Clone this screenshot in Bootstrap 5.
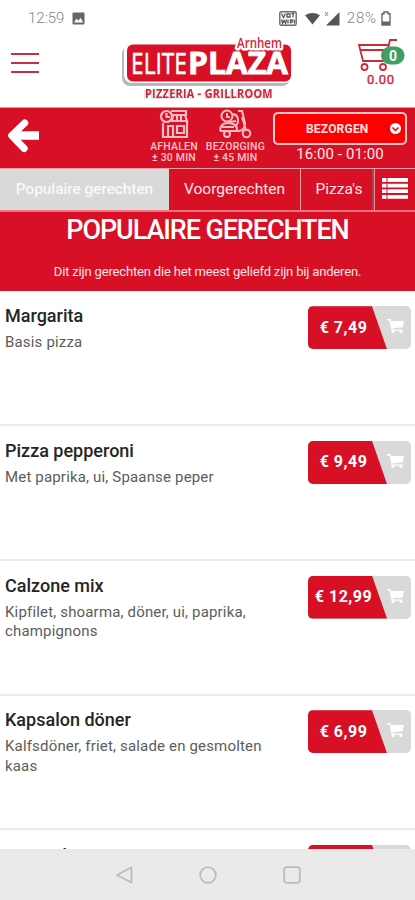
<!DOCTYPE html>
<html lang="nl">
<head>
<meta charset="utf-8">
<meta name="viewport" content="width=device-width, initial-scale=1">
<title>Elite Plaza Arnhem</title>
<link href="https://cdn.jsdelivr.net/npm/bootstrap@5.3.0/dist/css/bootstrap.min.css" rel="stylesheet">
<style>
:root{--brand:#d81026;--line:#ef8e97}
body{font-family:Roboto,"Liberation Sans",sans-serif;background:#fff;color:#222}
svg{display:block;flex:none}
.screen{width:415px;height:900px}
.statusbar{height:36px;padding:0 24px 0 28px;color:#858585;font-size:15px;font-weight:300}
.battery-text{margin-left:7px;letter-spacing:.8px}
.topbar{height:72px;border-bottom:1px solid var(--line);padding-left:11px;padding-right:7px}
.burger{width:28px;padding-top:17px}
.burger span{display:block;height:2px;background:#c9303f;margin-bottom:7px}
.logo{margin-left:79px}
.tagline{filter:drop-shadow(-1.500px 1.500px 0 #ddd)}
.cart{margin-left:54px;width:54px;color:var(--brand)}
.actions{height:60px;background:var(--brand);color:#fff}
.service{font-size:10.5px;line-height:11px;font-weight:500;letter-spacing:.2px;color:#fbc3c8;text-align:center;white-space:nowrap;padding-top:1px}
.service div{padding-top:2px}
.deliver{width:134px;height:33px;background:#fe0000;border:2px solid #ffc9c9;border-radius:5px;font-size:12px;font-weight:700;letter-spacing:.2px;color:#ffe3e3;padding-left:31px;padding-right:4px}
.hours{font-size:15px;line-height:18px;color:#ffe9e9;letter-spacing:.1px}
.tabs{height:44px;border-top:1px solid #f0a0a8;border-bottom:2px solid #ed7380;background:var(--brand);color:#ffe6e8;font-size:15.5px}
.tabs a{color:inherit;text-decoration:none;white-space:nowrap}
.tab-on{width:169px;background:#d9d9d9;font-weight:500;letter-spacing:-.1px;color:#f8f8f8!important}
.tab-two{width:132px;border-right:1px solid #f39da5}
.tab-three{width:73px;padding-left:5px;border-right:2px solid #a04650}
.tab-list{width:41px;border-left:1px solid #ef8e97;padding-bottom:3px}
.hero{height:79px;background:var(--brand);color:#fff}
.hero h1{font-size:27px;line-height:34px;font-weight:500;padding-top:1px;letter-spacing:-1.1px}
.hero p{font-size:13px;line-height:18px;color:#ffe3e5;padding-top:16px;letter-spacing:-.17px}
.menu-list{height:558px;padding-top:.6px}
.dish{height:134.7px;flex:none;border-bottom:2px solid #ebebeb;padding:14.6px 4px 0 5px}
.dish h2{font-size:18px;line-height:21px;font-weight:500;margin:-1px 0 7px;color:#252525}
.dish p{font-size:15px;line-height:19.5px;color:#5c5c5c;width:275px;letter-spacing:.17px}
.price{width:103px;height:43px;border-radius:5px;background:#d9d9d9}
.price b{width:79px;height:43px;background:var(--brand);clip-path:polygon(0 0,64px 0,100% 100%,0 100%);color:#fff;font-size:16px;font-weight:700;letter-spacing:.5px;padding-right:8px}
.navkeys{height:51px;background:#eaeaea;padding-left:115px;gap:66px}
</style>
<script src="https://cdn.jsdelivr.net/npm/bootstrap@5.3.0/dist/js/bootstrap.bundle.min.js"></script>
</head>
<body>
<svg width="0" height="0" class="position-absolute">
  <symbol id="basket" viewBox="0 0 18 16"><path d="M0 1h3.600l.5 2H17l-1.300 6.300-10 .9.3 1.200h9.500v1.400H4.600L2.500 2.400H0z" fill="#fff"/><circle cx="6" cy="13.600" r="1.500" fill="#fff"/><circle cx="14" cy="13.600" r="1.500" fill="#fff"/></symbol>
</svg>
<div class="screen d-flex flex-column overflow-hidden">
  <div class="statusbar d-flex align-items-center">
    <span>12:59</span>
    <svg class="ms-2" width="13" height="13" viewBox="0 0 13 13"><rect x=".5" y=".5" width="12" height="12" rx="1" fill="#666"/><path d="M2 10.500l2.500-3.700 2 2 2-3 2.700 4.700z" fill="#fff"/></svg>
    <svg class="ms-auto" width="18" height="15" viewBox="0 0 18 15"><rect x=".8" y=".8" width="16.400" height="13.400" rx="1.500" fill="#fff" stroke="#6a6a6a" stroke-width="1.400"/><path d="M2.500 2.500l2 4 2-4M8 3h3v3H8zM12.500 2.500h3M14 2.500v4M2.500 8.500l1 4 1.500-3 1.500 3 1-4M9 8.500v4M14.500 9h-3v3.500M11.500 11h2.500M15.500 9v3.500" fill="none" stroke="#555" stroke-width="1.300"/></svg>
    <svg class="ms-2" width="15" height="13" viewBox="0 0 16 13"><path d="M0 3Q8-2 16 3L8 13z" fill="#555"/></svg>
    <svg class="ms-1" width="16" height="15" viewBox="0 0 16 15"><path d="M15.500 1v13.500H2z" fill="#555"/><path d="M1 1l3 4M4 1L1 5" stroke="#888"/></svg>
    <span class="battery-text">28%</span>
    <svg class="ms-1" width="10" height="15" viewBox="0 0 10 15"><path d="M1 2.800h2V1h4v1.800h2V14H1z" fill="none" stroke="#666" stroke-width="1.400"/><path d="M1 10.500h8V14H1z" fill="#666"/></svg>
  </div>

  <header class="topbar d-flex align-items-start">
    <div class="burger"><span></span><span></span><span></span></div>
    <svg class="logo" width="182" height="70" viewBox="0 0 182 70">
      <rect x="4" y="10" width="168" height="40" rx="8" fill="#b8b8b8"/>
      <rect x="6" y="7" width="168" height="40" rx="8" fill="#fff"/>
      <rect x="9" y="8.500" width="164" height="37" rx="6" fill="#d81026"/>
      <g font-family="'Open Sans'"><text x="13" y="38" font-size="30" fill="#fff" stroke="#fff" stroke-width=".5" textLength="56" lengthAdjust="spacingAndGlyphs">ELITE</text><text x="70" y="38" font-size="30" font-weight="700" fill="#fff" stroke="#fff" stroke-width=".8" textLength="100" lengthAdjust="spacingAndGlyphs">PLAZA</text>
      <text x="119" y="11.500" font-size="13.500" font-weight="600" fill="#d3263a" stroke="#fff" stroke-width="5" stroke-linejoin="round" paint-order="stroke" textLength="45" lengthAdjust="spacingAndGlyphs">Arnhem</text></g>
      <text class="tagline" font-family="'Open Sans'" font-size="13" font-weight="700" transform="translate(27 61.500) scale(.84 1)" fill="#ce2438" textLength="152">PIZZERIA - GRILLROOM</text>
    </svg>
    <svg class="cart" width="54" height="54" viewBox="0 0 54 54" fill="none" stroke="#c92a3d" stroke-width="1.800">
      <path d="M43 4h-7l-5 21H9L5 9h29M7 14h26"/><circle cx="10.500" cy="31" r="3"/><circle cx="29" cy="31" r="3"/>
      <rect x="27" y="10.500" width="23.500" height="18" rx="9" fill="#3f9e62" stroke="none"/>
      <text x="39" y="24.500" font-size="14" font-weight="700" fill="#fff" stroke="none" text-anchor="middle">0</text>
      <text x="13" y="47.500" font-size="13" font-weight="400" fill="#c92a3d" stroke="#c92a3d" stroke-width=".4" textLength="27">0.00</text>
    </svg>
  </header>

  <div class="actions d-flex">
    <svg class="ms-2 mt-2" width="32" height="38" viewBox="0 0 32 38" fill="none" stroke="#fff"><path d="M16.500 7.500L3.500 20l12.500 13" stroke-width="7" stroke-linejoin="round" stroke-linecap="round" transform="translate(.2 -.5)"/><path d="M5 19.500h26" stroke-width="8.500"/></svg>
    <div class="service ms-auto d-flex flex-column align-items-center">
      <svg width="30" height="30" viewBox="0 0 30 30" fill="none" stroke="#fbbdc3" stroke-width="2.200"><path d="M12 2h15v4H13M14 6l-1 6h15l-2-6M18 6v6M22 6v6M4 14v14h24V12M4 28h24M9 28V17h5v11M18 17h7v7h-7z"/><circle cx="7.500" cy="7.500" r="5.500"/><path d="M7.500 4v4h3.500"/></svg>
      <div>AFHALEN<br>± 30 MIN</div>
    </div>
    <div class="service ms-2 d-flex flex-column align-items-center">
      <svg width="34" height="30" viewBox="0 0 34 30" fill="none" stroke="#fbbdc3" stroke-width="2"><circle cx="9" cy="7" r="5.500"/><path d="M9 4v4h3M2 22q0-8 8-8 9 0 9 7M2 22h19q6-1 6-8L24 2h-4M15 5q5 1 5 6t-3 6M4 18h12M24 8l4 13M12 13l6-1"/><circle cx="9" cy="25" r="3"/><circle cx="28.500" cy="24.500" r="3.800"/></svg>
      <div>BEZORGING<br>± 45 MIN</div>
    </div>
    <div class="ms-2 me-2 pt-1 d-flex flex-column align-items-center">
      <div class="deliver d-flex align-items-center justify-content-between"><span>BEZORGEN</span><svg width="11" height="11" viewBox="0 0 11 11"><circle cx="5.500" cy="5.500" r="5.500" fill="#fff"/><path d="M2.500 4.500l3 3 3-3" fill="none" stroke="#e00" stroke-width="1.500"/></svg></div>
      <div class="hours">16:00 - 01:00</div>
    </div>
  </div>

  <nav class="tabs d-flex">
    <a href="#" class="tab-on d-flex align-items-center justify-content-center">Populaire gerechten</a>
    <a href="#" class="tab-two d-flex align-items-center justify-content-center">Voorgerechten</a>
    <a href="#" class="tab-three d-flex align-items-center justify-content-center">Pizza's</a>
    <a href="#" class="tab-list d-flex align-items-center justify-content-center"><svg width="26" height="21" viewBox="0 0 26 21" stroke="#fff" stroke-width="3.800"><path d="M0 2h4.500M5.500 2H26M0 7.600h4.500M5.500 7.600H26M0 13.200h4.500M5.500 13.200H26M0 18.800h4.500M5.500 18.800H26"/></svg></a>
  </nav>

  <section class="hero text-center">
    <h1 class="m-0">POPULAIRE GERECHTEN</h1>
    <p class="m-0">Dit zijn gerechten die het meest geliefd zijn bij anderen.</p>
  </section>

  <main class="menu-list d-flex flex-column overflow-hidden">
    <article class="dish d-flex justify-content-between"><div><h2>Margarita</h2><p class="m-0">Basis pizza</p></div><div class="price d-flex overflow-hidden"><b class="d-flex align-items-center justify-content-center">€ 7,49</b><svg class="mt-2 pt-1" width="18" height="20"><use href="#basket" width="18" height="16"/></svg></div></article>
    <article class="dish d-flex justify-content-between"><div><h2>Pizza pepperoni</h2><p class="m-0">Met paprika, ui, Spaanse peper</p></div><div class="price d-flex overflow-hidden"><b class="d-flex align-items-center justify-content-center">€ 9,49</b><svg class="mt-2 pt-1" width="18" height="20"><use href="#basket" width="18" height="16"/></svg></div></article>
    <article class="dish d-flex justify-content-between"><div><h2>Calzone mix</h2><p class="m-0">Kipfilet, shoarma, döner, ui, paprika, champignons</p></div><div class="price d-flex overflow-hidden"><b class="d-flex align-items-center justify-content-center">€ 12,99</b><svg class="mt-2 pt-1" width="18" height="20"><use href="#basket" width="18" height="16"/></svg></div></article>
    <article class="dish d-flex justify-content-between"><div><h2>Kapsalon döner</h2><p class="m-0">Kalfsdöner, friet, salade en gesmolten kaas</p></div><div class="price d-flex overflow-hidden"><b class="d-flex align-items-center justify-content-center">€ 6,99</b><svg class="mt-2 pt-1" width="18" height="20"><use href="#basket" width="18" height="16"/></svg></div></article>
    <article class="dish d-flex justify-content-between"><div><h2 class="mt-0">Pizza shoarma</h2></div><div class="price d-flex overflow-hidden"><b></b></div></article>
  </main>

  <footer class="navkeys d-flex align-items-center">
    <svg width="18" height="18" viewBox="0 0 18 18" fill="none" stroke="#bcbcbc" stroke-width="1.800" stroke-linejoin="round"><path d="M16.500 1.500v15L2 9z"/></svg>
    <svg width="18" height="18" viewBox="0 0 18 18" fill="none" stroke="#bcbcbc" stroke-width="1.800"><circle cx="9" cy="9" r="7.800"/></svg>
    <svg width="18" height="18" viewBox="0 0 18 18" fill="none" stroke="#bcbcbc" stroke-width="1.800"><rect x="1.200" y="1.200" width="15.600" height="15.600" rx="2.500"/></svg>
  </footer>
</div>
</body>
</html>
